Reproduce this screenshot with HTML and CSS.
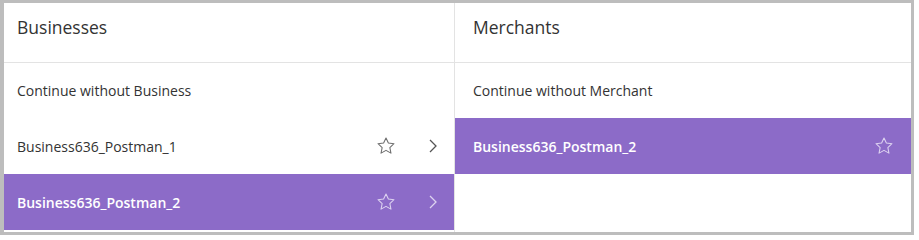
FILE: index.html
```html
<!DOCTYPE html>
<html>
<head>
<meta charset="utf-8">
<link rel="stylesheet" href="styles.css">
</head>
<body>
<div class="frame">
  <div class="col col-left">
    <div class="head">Businesses</div>
    <div class="row"><span class="label">Continue without Business</span></div>
    <div class="row"><span class="label">Business636_Postman_1</span>
      <svg class="star" viewBox="0 0 24 24"><path d="M12 3.2l2.6 5.6 6.1.7-4.5 4.2 1.2 6.1L12 16.8l-5.4 3 1.2-6.1-4.5-4.2 6.1-.7z"/></svg>
      <svg class="chev" viewBox="0 0 12 16"><path d="M3 2l6 6-6 6"/></svg>
    </div>
    <div class="row active"><span class="label">Business636_Postman_2</span>
      <svg class="star" viewBox="0 0 24 24"><path d="M12 3.2l2.6 5.6 6.1.7-4.5 4.2 1.2 6.1L12 16.8l-5.4 3 1.2-6.1-4.5-4.2 6.1-.7z"/></svg>
      <svg class="chev" viewBox="0 0 12 16"><path d="M3 2l6 6-6 6"/></svg>
    </div>
  </div>
  <div class="col col-right">
    <div class="head">Merchants</div>
    <div class="row"><span class="label">Continue without Merchant</span></div>
    <div class="row active"><span class="label">Business636_Postman_2</span>
      <svg class="star" viewBox="0 0 24 24"><path d="M12 3.2l2.6 5.6 6.1.7-4.5 4.2 1.2 6.1L12 16.8l-5.4 3 1.2-6.1-4.5-4.2 6.1-.7z"/></svg>
    </div>
  </div>
</div>
</body>
</html>
```
FILE: styles.css
```css
* { box-sizing: border-box; }
html, body { margin: 0; padding: 0; background: #fff; }
body { font-family: "Open Sans", "Noto Sans", sans-serif; color: #2e2e2e; }
.frame {
  display: flex;
  width: 914px;
  height: 235px;
  border-style: solid;
  border-color: #bdbdbd;
  border-width: 3px 3px 3px 4px;
  background: #fff;
}
.col { display: flex; flex-direction: column; }
.col-left { width: 451px; border-right: 1px solid #e3e3e3; }
.col-right { flex: 1; }
.head {
  height: 60px;
  border-bottom: 1px solid #e3e3e3;
  padding: 12px 0 0 13px;
  font-size: 17.5px;
  line-height: 24px;
  color: #333;
}
.col-right .head { padding-left: 18px; }
.row {
  height: 56px;
  display: flex;
  align-items: center;
  padding: 0 0 0 13px;
  font-size: 14px;
  color: #333;
}
.col-right .row { padding-left: 18px; }
.row:nth-child(2) { height: 55px; }
.label { flex: 1; }
.row.active { background: #8c6bc8; color: #fff; font-weight: 600; }
.star { width: 22px; height: 22px; fill: none; stroke: #6e6e6e; stroke-width: 1.15; stroke-linejoin: round; }
.chev { width: 12px; height: 16px; margin: 0 15px 0 30px; fill: none; stroke: #555; stroke-width: 1.3; }
.col-right .star { margin-right: 16px; }
.row.active .star { stroke: #ddd3f0; }
.row.active .chev { stroke: #ddd3f0; }
```
